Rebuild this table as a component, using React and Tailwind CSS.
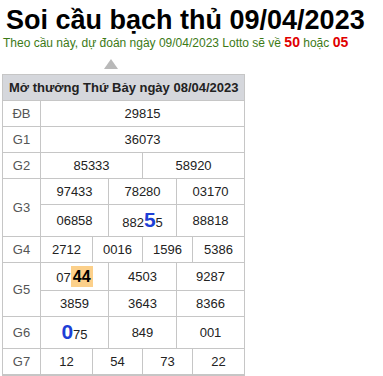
export default function App() {
  const line = "border border-[#c6c6c6]";
  const num = `${line} text-center text-[13px] text-[#222]`;
  const lab = `${line} text-center text-[13px] text-[#555]`;
  const big = "font-bold text-[21px] leading-none text-[#1d3fd6]";

  return (
    <div className="w-[383px] h-[376px] bg-white font-['Liberation_Sans',Arial,sans-serif] overflow-hidden">
      {/* tiêu đề */}
      <h1 className="pl-[6px] pt-[5px] text-[27px] leading-[30px] font-bold text-black">
        Soi cầu bạch thủ 09/04/2023
      </h1>
      <p className="pl-[3px] text-[12px] leading-[14px] text-[#3c7a16]">
        Theo cầu này, dự đoán ngày 09/04/2023 Lotto sẽ về{" "}
        <b className="text-[14px] text-[#e00000]">50</b> hoặc{" "}
        <b className="text-[14px] text-[#e00000]">05</b>
      </p>

      {/* mũi tên */}
      <div className="h-[24px] pl-[104px] pt-[9px]">
        <div className="w-0 h-0 border-l-[7px] border-r-[7px] border-b-[10px] border-l-transparent border-r-transparent border-b-[#b9b9b9]" />
      </div>

      {/* bảng kết quả */}
      <table className="ml-[2px] w-[242px] table-fixed border-collapse border-b-2 border-b-[#c6c6c6]">
        <colgroup>
          <col className="w-[38px]" />
          <col className="w-[52px]" />
          <col className="w-[16px]" />
          <col className="w-[34px]" />
          <col className="w-[34px]" />
          <col className="w-[16px]" />
          <col className="w-[52px]" />
        </colgroup>
        <tbody>
          <tr className="h-[26px] bg-[#d5d7dc]">
            <td colSpan={7} className={`${line} pl-[6px] text-[13px] font-bold text-[#222] whitespace-nowrap`}>
              Mở thưởng Thứ Bảy ngày 08/04/2023
            </td>
          </tr>
          <tr className="h-[26px]">
            <td className={lab}>ĐB</td>
            <td colSpan={6} className={num}>29815</td>
          </tr>
          <tr className="h-[26px]">
            <td className={lab}>G1</td>
            <td colSpan={6} className={num}>36073</td>
          </tr>
          <tr className="h-[26px]">
            <td className={lab}>G2</td>
            <td colSpan={3} className={num}>85333</td>
            <td colSpan={3} className={num}>58920</td>
          </tr>
          <tr className="h-[26px]">
            <td rowSpan={2} className={lab}>G3</td>
            <td colSpan={2} className={num}>97433</td>
            <td colSpan={2} className={num}>78280</td>
            <td colSpan={2} className={num}>03170</td>
          </tr>
          <tr className="h-[32px]">
            <td colSpan={2} className={num}>06858</td>
            <td colSpan={2} className={num}>
              882<span className={big}>5</span>5
            </td>
            <td colSpan={2} className={num}>88818</td>
          </tr>
          <tr className="h-[26px]">
            <td className={lab}>G4</td>
            <td className={num}>2712</td>
            <td colSpan={2} className={num}>0016</td>
            <td colSpan={2} className={num}>1596</td>
            <td className={num}>5386</td>
          </tr>
          <tr className="h-[28px]">
            <td rowSpan={2} className={lab}>G5</td>
            <td colSpan={2} className={num}>
              07<span className="inline-block bg-[#fcd08a] px-[2px] text-[16px] leading-[21px] font-bold text-black">44</span>
            </td>
            <td colSpan={2} className={num}>4503</td>
            <td colSpan={2} className={num}>9287</td>
          </tr>
          <tr className="h-[26px]">
            <td colSpan={2} className={num}>3859</td>
            <td colSpan={2} className={num}>3643</td>
            <td colSpan={2} className={num}>8366</td>
          </tr>
          <tr className="h-[32px]">
            <td className={lab}>G6</td>
            <td colSpan={2} className={num}>
              <span className={big}>0</span>75
            </td>
            <td colSpan={2} className={num}>849</td>
            <td colSpan={2} className={num}>001</td>
          </tr>
          <tr className="h-[26px]">
            <td className={lab}>G7</td>
            <td className={num}>12</td>
            <td colSpan={2} className={num}>54</td>
            <td colSpan={2} className={num}>73</td>
            <td className={num}>22</td>
          </tr>
        </tbody>
      </table>
    </div>
  );
}
